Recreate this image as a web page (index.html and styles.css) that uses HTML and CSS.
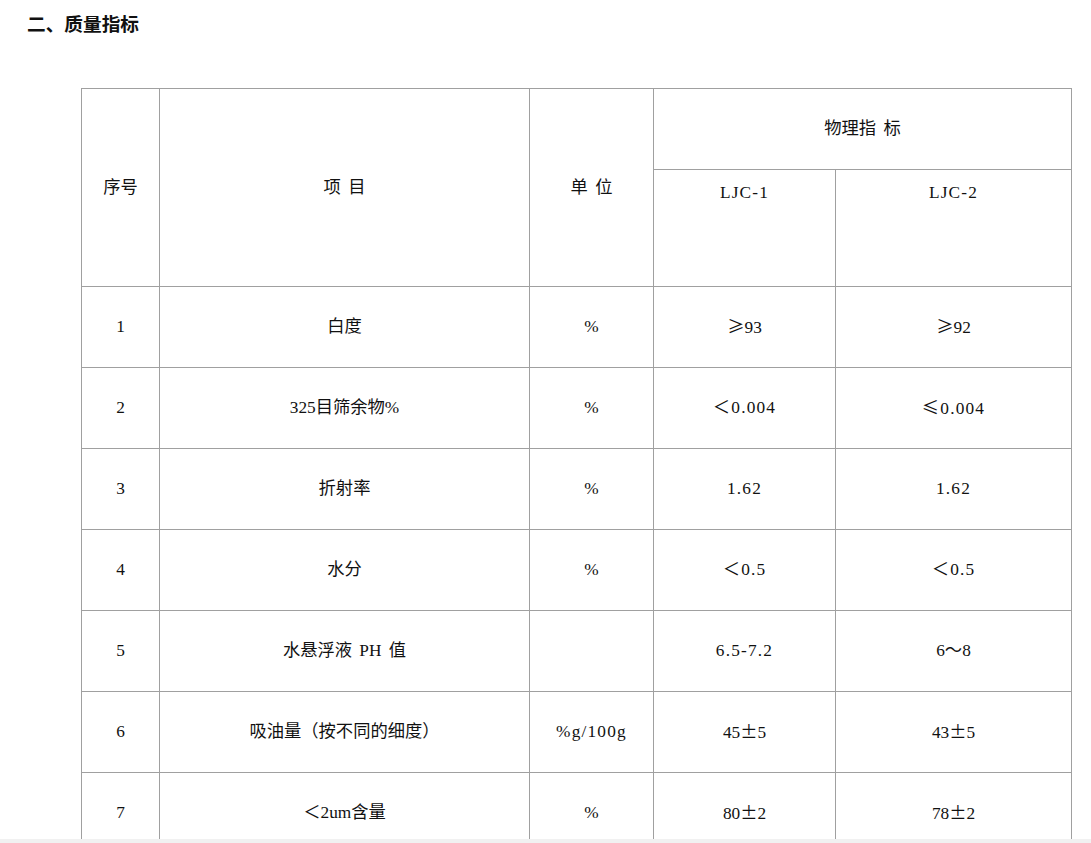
FILE: index.html
```html
<!DOCTYPE html>
<html lang="zh">
<head>
<meta charset="utf-8">
<title>质量指标</title>
<link rel="stylesheet" href="styles.css">
</head>
<body>
<div class="page">
  <h2 class="heading">二、质量指标</h2>
  <table class="spec">
    <colgroup>
      <col class="c1"><col class="c2"><col class="c3"><col class="c4"><col class="c5">
    </colgroup>
    <tr class="h1">
      <td rowspan="2">序号</td>
      <td rowspan="2" class="sp">项 目</td>
      <td rowspan="2" class="sp">单 位</td>
      <td colspan="2" class="sp">物理指 标</td>
    </tr>
    <tr class="h2">
      <td class="top num">LJC-1</td>
      <td class="top num">LJC-2</td>
    </tr>
    <tr><td>1</td><td>白度</td><td>%</td><td><span class="sans">≥</span>93</td><td><span class="sans">≥</span>92</td></tr>
    <tr><td>2</td><td>325目筛余物%</td><td>%</td><td class="num">＜0.004</td><td class="num"><span class="sans">≤</span>0.004</td></tr>
    <tr><td>3</td><td>折射率</td><td>%</td><td class="num">1.62</td><td class="num">1.62</td></tr>
    <tr><td>4</td><td>水分</td><td>%</td><td class="num">＜0.5</td><td class="num">＜0.5</td></tr>
    <tr><td>5</td><td class="sp">水悬浮液 PH 值</td><td></td><td class="num">6.5-7.2</td><td>6～8</td></tr>
    <tr><td>6</td><td>吸油量（按不同的细度）</td><td class="num">%g/100g</td><td>45<span class="sans">±</span>5</td><td>43<span class="sans">±</span>5</td></tr>
    <tr><td>7</td><td>＜2um含量</td><td>%</td><td>80<span class="sans">±</span>2</td><td>78<span class="sans">±</span>2</td></tr>
  </table>
</div>
<div class="hbar"></div>
</body>
</html>
```

FILE: styles.css
```css
html, body {
  margin: 0;
  padding: 0;
  overflow: hidden;
  background: #ffffff;
}
body {
  font-family: "Liberation Serif", "Noto Sans CJK SC", serif;
  color: #111111;
  font-size: 17.3px;
}
.page {
  padding: 14px 0 0 27px;
}
.heading {
  margin: 0;
  font-size: 18.67px;
  line-height: 22px;
  font-weight: bold;
  font-family: "Liberation Serif", "Noto Sans CJK SC", serif;
}
.spec {
  margin: 52px 0 0 54px;
  border-collapse: collapse;
  table-layout: fixed;
  width: 990px;
}
.c1 { width: 78px; }
.c2 { width: 370px; }
.c3 { width: 124px; }
.c4 { width: 182px; }
.c5 { width: 236px; }
.spec td {
  border: 1px solid #a0a0a0;
  text-align: center;
  vertical-align: middle;
  padding: 0;
  height: 80px;
  font-size: 17.3px;
  line-height: 20px;
}
.spec tr.h1 td { height: 80px; }
.spec tr.h2 td { height: 103px; }
.spec td.top {
  vertical-align: top;
  padding-top: 13px;
}
.sp { word-spacing: 3px; }
.num { letter-spacing: 1.2px; }
.sans { font-family: "Noto Sans CJK SC", "Liberation Sans", sans-serif; }
.hbar {
  position: fixed;
  left: 0;
  right: 0;
  bottom: 0;
  height: 4px;
  background: #f1f1f1;
}
```
